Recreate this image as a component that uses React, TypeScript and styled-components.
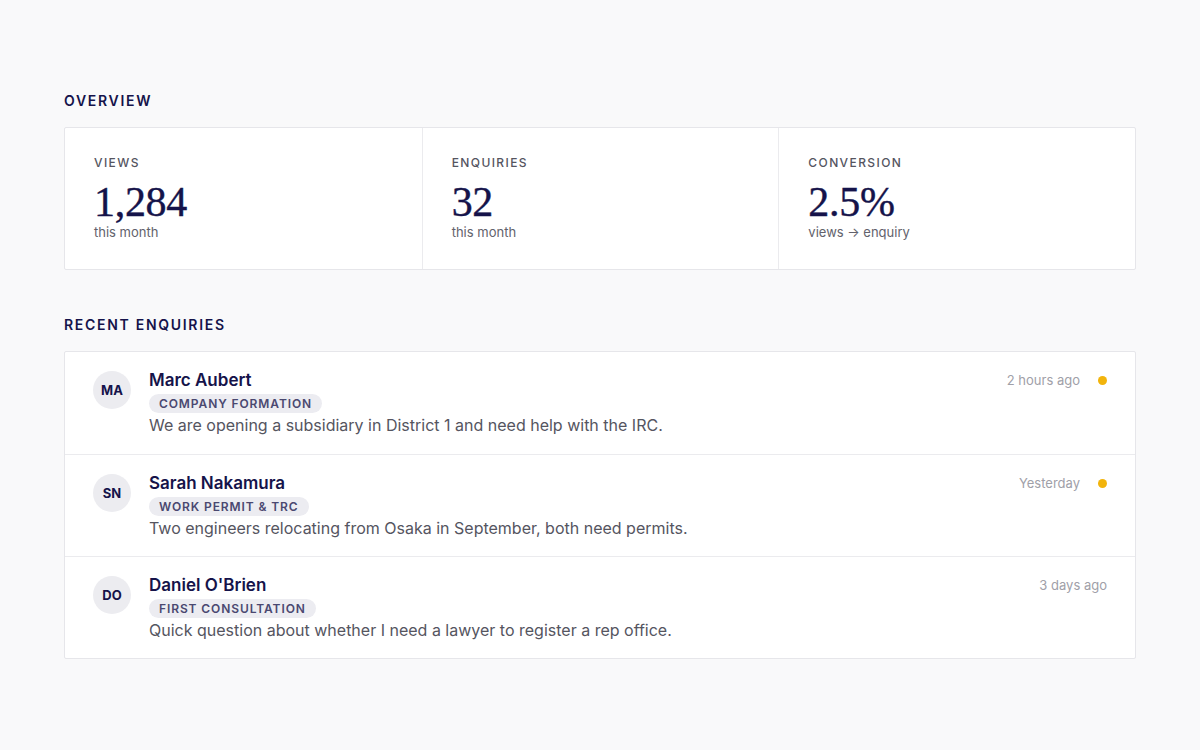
import React from "react";
import styled, { createGlobalStyle } from "styled-components";

const Global = createGlobalStyle`
  html, body { margin: 0; padding: 0; background: #f9f9fa; }
  body { font-family: Inter, "Noto Sans", sans-serif; -webkit-font-smoothing: antialiased; }
`;

const Page = styled.div`
  padding: 92px 64px 60px;
  display: flex;
  flex-direction: column;
`;

const SectionTitle = styled.h2<{ $mt?: number }>`
  margin: ${(p) => p.$mt ?? 0}px 0 17px;
  font-size: 14px;
  font-weight: 600;
  letter-spacing: 1.7px;
  color: #15134a;
  line-height: 18px;
`;

const StatsCard = styled.div`
  display: grid;
  grid-template-columns: repeat(3, 1fr);
  background: #fff;
  border: 1px solid #e6e6ea;
  border-radius: 2px;
  height: 143px;
  box-sizing: border-box;
`;

const Stat = styled.div`
  padding: 28px 29px;
  border-left: 1px solid #ebebee;
  &:first-child { border-left: none; }
  display: flex;
  flex-direction: column;
`;

const StatLabel = styled.div`
  font-size: 12px;
  font-weight: 500;
  letter-spacing: 1.4px;
  color: #55555f;
  line-height: 14px;
`;

const StatValue = styled.div`
  font-family: "Liberation Serif", "DejaVu Serif", serif;
  font-size: 42px;
  font-weight: 400;
  color: #15134a;
  line-height: 44px;
  margin-top: 10px;
  letter-spacing: -0.3px;
  -webkit-text-stroke: 0.4px #15134a;
`;

const StatSub = styled.div`
  font-size: 13px;
  color: #62626c;
  line-height: 16px;
`;

const ListCard = styled.div`
  background: #fff;
  border: 1px solid #e6e6ea;
  border-radius: 2px;
`;

const Row = styled.div`
  display: flex;
  align-items: flex-start;
  padding: 18px 28px 17px 28px;
  height: 102px;
  box-sizing: border-box;
  border-top: 1px solid #ebebee;
  &:first-child { border-top: none; }
`;

const Avatar = styled.div`
  width: 38px;
  height: 38px;
  border-radius: 50%;
  background: #ececf0;
  color: #15134a;
  font-size: 13px;
  font-weight: 700;
  display: flex;
  align-items: center;
  justify-content: center;
  flex-shrink: 0;
  margin-top: 1px;
`;

const Body = styled.div`
  flex: 1;
  margin-left: 18px;
  display: flex;
  flex-direction: column;
  align-items: flex-start;
`;

const Name = styled.div`
  font-size: 17px;
  font-weight: 600;
  color: #15134a;
  line-height: 20px;
`;

const Tag = styled.span`
  margin-top: 4px;
  font-size: 12px;
  font-weight: 600;
  letter-spacing: 0.9px;
  color: #4a4870;
  background: #ececf1;
  border-radius: 10px;
  padding: 1px 10px;
  line-height: 17px;
`;

const Message = styled.div`
  margin-top: 2px;
  font-size: 16px;
  color: #55555f;
  line-height: 20px;
`;

const Meta = styled.div`
  display: flex;
  align-items: center;
  gap: 18px;
  margin-top: 2px;
`;

const Time = styled.div`
  font-size: 13px;
  color: #a0a0a8;
  line-height: 16px;
`;

const Dot = styled.span`
  width: 9px;
  height: 9px;
  border-radius: 50%;
  background: #f2b40c;
  display: inline-block;
`;

const stats = [
  { label: "VIEWS", value: "1,284", sub: "this month" },
  { label: "ENQUIRIES", value: "32", sub: "this month" },
  { label: "CONVERSION", value: "2.5%", sub: "views → enquiry" },
];

const enquiries = [
  {
    initials: "MA",
    name: "Marc Aubert",
    tag: "COMPANY FORMATION",
    msg: "We are opening a subsidiary in District 1 and need help with the IRC.",
    time: "2 hours ago",
    unread: true,
  },
  {
    initials: "SN",
    name: "Sarah Nakamura",
    tag: "WORK PERMIT & TRC",
    msg: "Two engineers relocating from Osaka in September, both need permits.",
    time: "Yesterday",
    unread: true,
  },
  {
    initials: "DO",
    name: "Daniel O'Brien",
    tag: "FIRST CONSULTATION",
    msg: "Quick question about whether I need a lawyer to register a rep office.",
    time: "3 days ago",
    unread: false,
  },
];

export default function App() {
  return (
    <>
      <Global />
      <Page>
        <SectionTitle>OVERVIEW</SectionTitle>
        <StatsCard>
          {stats.map((s) => (
            <Stat key={s.label}>
              <StatLabel>{s.label}</StatLabel>
              <StatValue>{s.value}</StatValue>
              <StatSub>{s.sub}</StatSub>
            </Stat>
          ))}
        </StatsCard>
        <SectionTitle $mt={46}>RECENT ENQUIRIES</SectionTitle>
        <ListCard>
          {enquiries.map((e) => (
            <Row key={e.initials}>
              <Avatar>{e.initials}</Avatar>
              <Body>
                <Name>{e.name}</Name>
                <Tag>{e.tag}</Tag>
                <Message>{e.msg}</Message>
              </Body>
              <Meta>
                <Time>{e.time}</Time>
                {e.unread && <Dot />}
              </Meta>
            </Row>
          ))}
        </ListCard>
      </Page>
    </>
  );
}
